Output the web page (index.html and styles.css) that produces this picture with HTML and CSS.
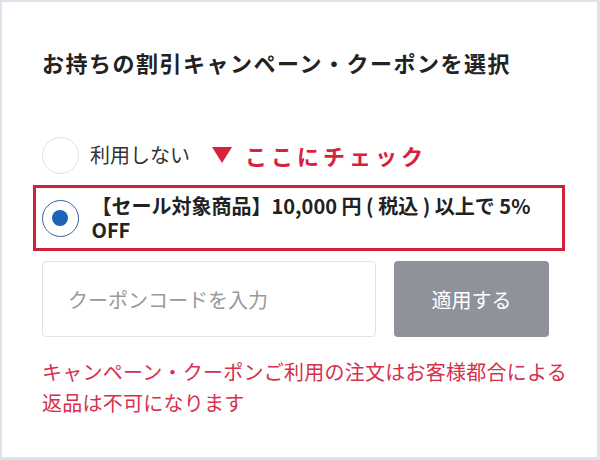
FILE: index.html
```html
<!DOCTYPE html>
<html lang="ja">
<head>
<meta charset="utf-8">
<link rel="stylesheet" href="styles.css">
</head>
<body>
<div class="card">
  <h1 class="title">お持ちの割引キャンペーン・クーポンを選択</h1>
  <div class="option option-none">
    <span class="radio"></span>
    <span class="label">利用しない</span>
    <span class="hint">
      <svg class="tri" width="20" height="16" viewBox="0 0 20 16"><polygon points="0,0 20,0 10,16" fill="#d8213f"/></svg>
      <span class="hint-text">ここにチェック</span>
    </span>
  </div>
  <div class="option option-sale">
    <span class="radio radio-on"><span class="dot"></span></span>
    <span class="label-bold">【セール対象商品】10,000 円 ( 税込 ) 以上で 5% OFF</span>
  </div>
  <div class="code-row">
    <div class="code-input">クーポンコードを入力</div>
    <div class="apply">適用する</div>
  </div>
  <p class="notice">キャンペーン・クーポンご利用の注文はお客様都合による返品は不可になります</p>
</div>
</body>
</html>
```

FILE: styles.css
```css
html, body {
  margin: 0;
  padding: 0;
}
body {
  background: #dce3ea;
  width: 600px;
  height: 460px;
  box-sizing: border-box;
  padding: 2px 3px 3px 2px;
  font-family: "Noto Sans CJK JP", "Noto Sans", sans-serif;
  color: #333;
}
.card {
  background: #fff;
  height: 455px;
  box-sizing: border-box;
  padding: 44px 30px 0 40px;
}
.title {
  margin: 0;
  font-size: 22px;
  font-weight: 700;
  letter-spacing: 1.5px;
  line-height: 33px;
  color: #222;
}
.option {
  display: flex;
  align-items: center;
}
.option-none {
  margin-top: 57px;
  height: 38px;
}
.radio {
  width: 37px;
  height: 37px;
  box-sizing: border-box;
  border: 1.5px solid #dde1e7;
  border-radius: 50%;
  flex: none;
  display: flex;
  align-items: center;
  justify-content: center;
}
.radio-on {
  border-color: #2e64a5;
}
.dot {
  width: 16px;
  height: 16px;
  border-radius: 50%;
  background: #1e63b6;
}
.label {
  margin-left: 11px;
  font-size: 20px;
  line-height: 24px;
  color: #333;
}
.hint {
  margin-left: 22px;
  display: flex;
  align-items: center;
}
.tri {
  display: block;
}
.hint-text {
  margin-left: 13px;
  font-size: 22px;
  font-weight: 700;
  letter-spacing: 4px;
  color: #d8213f;
  line-height: 30px;
}
.option-sale {
  margin: 11px 0 0 -9px;
  border: 3px solid #d0223c;
  padding: 6px 0 6px 5.5px;
  width: 532px;
  box-sizing: border-box;
}
.label-bold {
  margin-left: 13px;
  font-size: 20px;
  font-weight: 700;
  line-height: 24px;
  color: #222;
  width: 450px;
}
.code-row {
  display: flex;
  gap: 18px;
  margin-top: 10px;
}
.code-input {
  width: 334px;
  height: 76px;
  box-sizing: border-box;
  border: 1.5px solid #dfe3e8;
  border-radius: 4px;
  padding-left: 25px;
  display: flex;
  align-items: center;
  font-size: 20px;
  color: #999;
}
.apply {
  width: 155px;
  height: 76px;
  border-radius: 4px;
  background: #8f929a;
  color: #fff;
  font-size: 20px;
  display: flex;
  align-items: center;
  justify-content: center;
}
.notice {
  margin: 19px 0 0;
  font-size: 20px;
  letter-spacing: 0.25px;
  line-height: 31px;
  color: #d6304c;
}
```
